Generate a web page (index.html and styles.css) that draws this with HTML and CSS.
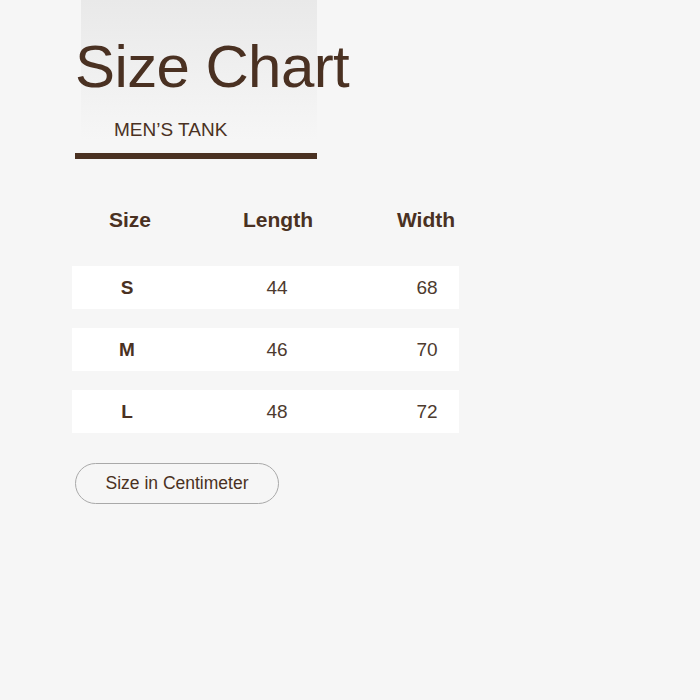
FILE: index.html
```html
<!DOCTYPE html>
<html>
<head>
<meta charset="utf-8">
<link rel="stylesheet" href="styles.css">
</head>
<body>
<div class="page">
  <header class="header">
    <h1 class="title">Size Chart</h1>
    <div class="subtitle">MEN’S TANK</div>
    <div class="bar"></div>
  </header>
  <div class="table">
    <div class="row head">
      <div class="cell">Size</div>
      <div class="cell">Length</div>
      <div class="cell">Width</div>
    </div>
    <div class="row body">
      <div class="cell size">S</div>
      <div class="cell">44</div>
      <div class="cell">68</div>
    </div>
    <div class="row body">
      <div class="cell size">M</div>
      <div class="cell">46</div>
      <div class="cell">70</div>
    </div>
    <div class="row body">
      <div class="cell size">L</div>
      <div class="cell">48</div>
      <div class="cell">72</div>
    </div>
  </div>
  <div class="unit">Size in Centimeter</div>
</div>
</body>
</html>
```
FILE: styles.css
```css
html, body {
  margin: 0;
  padding: 0;
  background: #f6f6f6;
}
body {
  width: 700px;
  height: 700px;
  font-family: "Liberation Sans", Arial, sans-serif;
  color: #4a3122;
}
.page {
  display: flex;
  flex-direction: column;
  align-items: flex-start;
}
.header {
  margin-left: 75px;
  width: 242px;
  background: linear-gradient(to bottom, #e9e9e9 0%, #f6f6f6 100%) no-repeat 6px 0 / 236px 140px;
  display: flex;
  flex-direction: column;
}
.title {
  margin: 37px 0 0 0;
  font-size: 60px;
  line-height: 60px;
  font-weight: 400;
  letter-spacing: -0.6px;
  white-space: nowrap;
  color: #4a3122;
}
.subtitle {
  margin-top: 24px;
  padding-left: 39px;
  font-size: 19px;
  line-height: 18px;
  color: #4a3122;
}
.bar {
  margin-top: 14px;
  height: 6px;
  width: 242px;
  background: #4a3122;
}
.table {
  margin-left: 72px;
  margin-top: 39px;
  width: 387px;
  display: flex;
  flex-direction: column;
  gap: 19px;
}
.row {
  height: 43px;
  display: flex;
  align-items: center;
}
.row .cell {
  flex-shrink: 0;
  text-align: center;
  white-space: nowrap;
}
.head {
  padding-left: 18px;
  gap: 68px;
  margin-bottom: 6px;
  font-size: 21px;
  font-weight: 700;
  color: #4a3122;
}
.head .cell {
  width: 80px;
}
.body {
  background: #ffffff;
  padding-left: 25px;
  gap: 90px;
  font-size: 19px;
  color: #4d3a2e;
}
.body .cell {
  width: 60px;
}
.body .size {
  font-weight: 700;
  color: #4a3122;
}
.unit {
  margin-top: 30px;
  margin-left: 75px;
  width: 202px;
  height: 39px;
  border: 1px solid #a9a9a9;
  border-radius: 21px;
  display: flex;
  align-items: center;
  justify-content: center;
  font-size: 17.5px;
  color: #4a3122;
}
```
